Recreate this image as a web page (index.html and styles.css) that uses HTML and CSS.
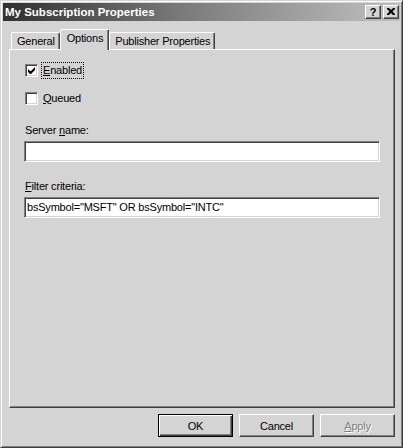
FILE: index.html
```html
<!DOCTYPE html>
<html lang="en">
<head>
  <meta charset="UTF-8">
  <title>My Subscription Properties</title>
  <link rel="stylesheet" href="styles.css">
</head>
<body>
  <div class="window">
    <div class="titlebar">
      <span class="title">My Subscription Properties</span>
      <div class="caption-buttons">
        <span class="cap-btn help">?</span>
        <span class="cap-btn close">
          <svg width="8" height="7" viewBox="0 0 8 7"><path d="M0 0h2l2 2 2-2h2v1l-2.5 2.5 2.5 2.5v1h-2l-2-2-2 2h-2v-1l2.5-2.5-2.5-2.5z" fill="#000"/></svg>
        </span>
      </div>
    </div>

    <div class="tabs">
      <div class="tab">General</div>
      <div class="tab active">Options</div>
      <div class="tab">Publisher Properties</div>
    </div>

    <div class="panel">
      <!-- Checkboxes -->
      <div class="check-row first">
        <span class="checkbox">
          <svg width="7" height="7" viewBox="0 0 7 7"><path d="M0 2v3l2 2h1l4-4v-3l-4 4h-1z" fill="#000"/></svg>
        </span>
        <span class="check-label focus"><u>E</u>nabled</span>
      </div>
      <div class="check-row">
        <span class="checkbox"></span>
        <span class="check-label"><u>Q</u>ueued</span>
      </div>

      <!-- Fields -->
      <div class="field">
        <div class="field-label">Server <u>n</u>ame:</div>
        <div class="textbox"></div>
      </div>
      <div class="field">
        <div class="field-label"><u>F</u>ilter criteria:</div>
        <div class="textbox">bsSymbol="MSFT" OR bsSymbol="INTC"</div>
      </div>
    </div>

    <div class="buttons">
      <div class="btn default">OK</div>
      <div class="btn">Cancel</div>
      <div class="btn disabled"><u>A</u>pply</div>
    </div>
  </div>
</body>
</html>
```

FILE: styles.css
```css
body {
  margin: 0;
  background: #d4d4d4;
  font-family: "Liberation Sans", Arial, sans-serif;
  font-size: 11px;
  letter-spacing: -0.2px;
  color: #000;
}
.window {
  width: 403px;
  height: 448px;
  box-sizing: border-box;
  border-top: 1px solid #d4d4d4;
  border-left: 1px solid #d4d4d4;
  border-right: 1px solid #404040;
  border-bottom: 1px solid #404040;
  box-shadow: inset 1px 1px #fff, inset -1px -1px #808080;
  padding: 2px;
  display: flex;
  flex-direction: column;
  background: #d4d4d4;
}
.titlebar {
  height: 18px;
  flex: none;
  display: flex;
  align-items: center;
  justify-content: space-between;
  background: linear-gradient(to right, #303030, #7a7a7a 45%, #c0c0c0);
  padding: 0 1px 0 2px;
}
.title {
  color: #fff;
  font-weight: bold;
  font-size: 11.5px;
  letter-spacing: 0;
}
.caption-buttons {
  display: flex;
  gap: 2px;
}
.cap-btn {
  width: 16px;
  height: 14px;
  box-sizing: border-box;
  background: #d4d4d4;
  border-top: 1px solid #fff;
  border-left: 1px solid #fff;
  border-right: 1px solid #404040;
  border-bottom: 1px solid #404040;
  box-shadow: inset -1px -1px #808080;
  display: flex;
  align-items: center;
  justify-content: center;
  font-weight: bold;
  font-size: 11px;
  line-height: 1;
}
.close svg {
  display: block;
  margin-top: -1px;
}
.tabs {
  height: 28px;
  flex: none;
  display: flex;
  align-items: flex-end;
  padding-left: 8px;
}
.tab {
  height: 17px;
  box-sizing: border-box;
  padding: 2px 4px 0 5px;
  border-top: 1px solid #fff;
  border-left: 1px solid #fff;
  border-right: 1px solid #404040;
  border-radius: 2px 2px 0 0;
  box-shadow: inset -1px 0 #808080;
  background: #d4d4d4;
  line-height: 13px;
}
.tab.active {
  height: 21px;
  margin-bottom: -1px;
  padding: 2px 5px 0 6px;
  position: relative;
  z-index: 1;
}
.panel {
  flex: none;
  height: 359px;
  margin: 0 5px 0 6px;
  box-sizing: border-box;
  border-top: 1px solid #fff;
  border-left: 1px solid #fff;
  border-right: 1px solid #404040;
  border-bottom: 1px solid #404040;
  box-shadow: inset -1px -1px #808080;
  padding: 12px 0 0 15px;
}
.check-row {
  height: 16px;
  display: flex;
  align-items: center;
  margin-top: 12px;
}
.check-row.first {
  margin-top: 0;
}
.checkbox {
  width: 13px;
  height: 13px;
  box-sizing: border-box;
  background: #fff;
  border-top: 1px solid #808080;
  border-left: 1px solid #808080;
  border-right: 1px solid #fff;
  border-bottom: 1px solid #fff;
  box-shadow: inset 1px 1px #404040, inset -1px -1px #d4d4d4;
  display: flex;
  align-items: center;
  justify-content: center;
}
.check-label {
  margin-left: 3px;
  padding: 1px 1px;
  line-height: 13px;
  border: 1px solid transparent;
}
.check-label.focus {
  border: 1px dotted #000;
}
.field {
  margin-top: 18px;
}
.field-label {
  line-height: 13px;
  margin-bottom: 4px;
}
.textbox {
  width: 356px;
  height: 21px;
  margin-left: -1px;
  box-sizing: border-box;
  background: #fff;
  border-top: 1px solid #808080;
  border-left: 1px solid #808080;
  border-right: 1px solid #fff;
  border-bottom: 1px solid #fff;
  box-shadow: inset 1px 1px #404040, inset -1px -1px #d4d4d4;
  padding: 0 2px;
  line-height: 19px;
  white-space: nowrap;
}
.buttons {
  display: flex;
  justify-content: flex-end;
  gap: 6px;
  margin-top: 6px;
  padding-right: 5px;
}
.btn {
  width: 75px;
  height: 23px;
  box-sizing: border-box;
  border-top: 1px solid #fff;
  border-left: 1px solid #fff;
  border-right: 1px solid #404040;
  border-bottom: 1px solid #404040;
  box-shadow: inset -1px -1px #808080;
  display: flex;
  align-items: center;
  justify-content: center;
}
.btn.default {
  border: 1px solid #000;
  box-shadow: inset 1px 1px #fff, inset -1px -1px #404040, inset -2px -2px #808080;
}
.btn.disabled {
  color: #808080;
  text-shadow: 1px 1px #fff;
}
```
